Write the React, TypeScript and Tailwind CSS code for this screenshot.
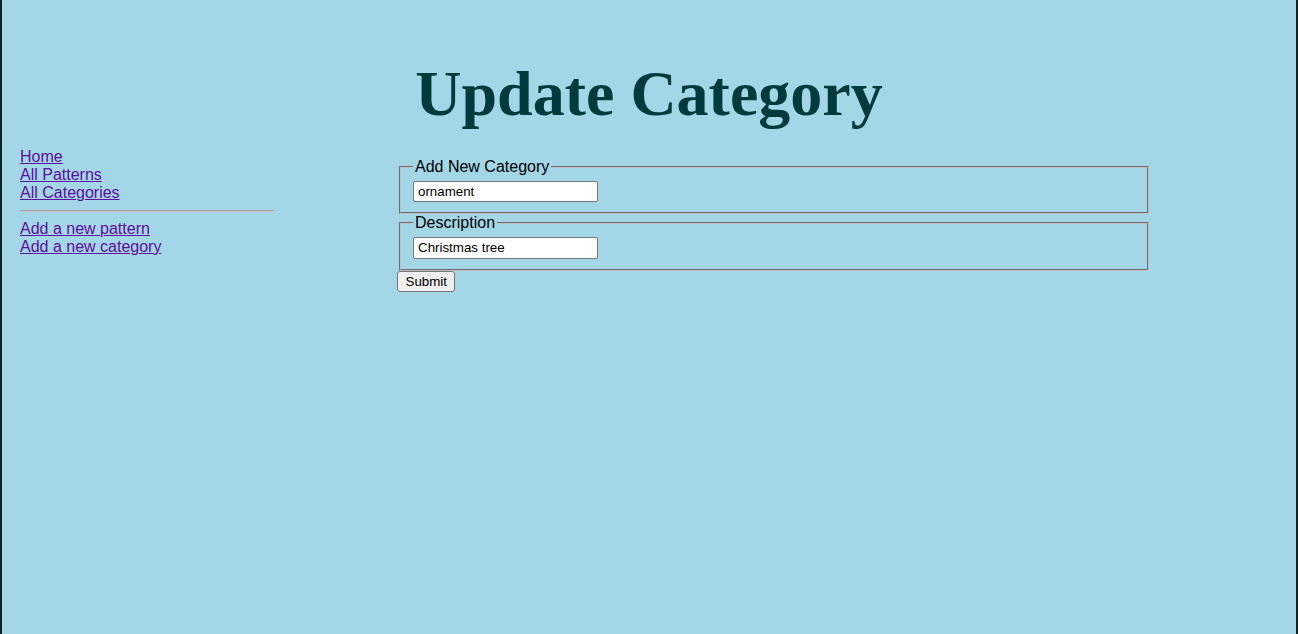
import React from 'react';

// ─── Side navigation ───
function SideNav() {
    const linkCls = 'block w-fit text-[#600c9e] underline leading-[18px]';
    return (
        <nav className="ml-[18px] w-[254px] shrink-0">
            <a href="#" className={linkCls}>Home</a>
            <a href="#" className={linkCls}>All Patterns</a>
            <a href="#" className={linkCls}>All Categories</a>
            <hr className="my-[8px] h-0 border-0 border-t border-b border-t-[#9e9e9e] border-b-[#c6c6c6]" />
            <a href="#" className={linkCls}>Add a new pattern</a>
            <a href="#" className={linkCls}>Add a new category</a>
        </nav>
    );
}

// ─── Fieldset with one text input ───
function Field({ legend, value }: { legend: string; value: string }) {
    return (
        <fieldset className="mx-[2px] border-2 border-[#c0c0c0] [border-style:groove] px-[12px] pt-[5px] pb-[10px]">
            <legend className="px-[2px] leading-[18px] text-black">{legend}</legend>
            <input
                type="text"
                defaultValue={value}
                className="block h-[21.3px] w-[185px] rounded-[2px] border border-[#767676] bg-white px-[4px] text-[13.33px] text-black outline-none"
            />
        </fieldset>
    );
}

export default function App() {
    return (
        <div className="min-h-[634px] bg-[#0f2427] px-[2px]">
            <div className="min-h-[634px] bg-[#a3d7e7] pt-[57px] font-['Liberation_Sans',Arial,sans-serif] text-[16px]">
                <h1 className="text-center font-['Liberation_Serif','Times_New_Roman',serif] text-[64px] font-bold leading-[74px] text-[#013a3d]">
                    Update Category
                </h1>

                <div className="mt-[17px] flex items-start">
                    <SideNav />
                    <form className="ml-[123px] mt-[10px] w-[754px]" onSubmit={e => e.preventDefault()}>
                        <Field legend="Add New Category" value="ornament" />
                        <Field legend="Description" value="Christmas tree" />
                        <button
                            type="submit"
                            className="block h-[21px] rounded-[3px] border border-[#767676] bg-[#efefef] px-[7.5px] text-[13.33px] leading-[19px] text-black"
                        >
                            Submit
                        </button>
                    </form>
                </div>
            </div>
        </div>
    );
}
